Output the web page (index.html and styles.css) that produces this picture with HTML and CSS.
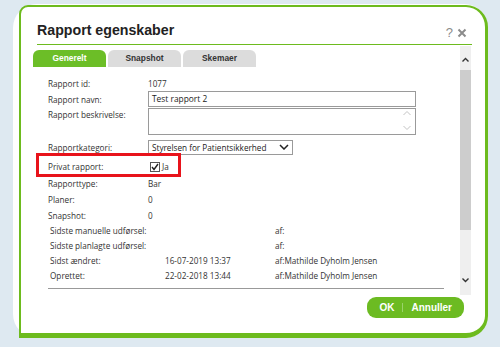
FILE: index.html
```html
<!DOCTYPE html>
<html lang="da">
  <head>
    <meta charset="UTF-8">
    <title>Rapport egenskaber</title>
    <link rel="stylesheet" href="styles.css">
  </head>
  <body>
    <div class="frame">
      <div class="dialog">
        <!-- Title -->
        <div class="header">
          <h1>Rapport egenskaber</h1>
          <div class="tools">
            <span class="help">?</span>
            <svg class="close" width="10" height="10" viewBox="0 0 10 10"><path d="M1.5 1.5L8.5 8.5M8.5 1.5L1.5 8.5" stroke="#8c8c8c" stroke-width="2"/></svg>
          </div>
        </div>

        <div class="main">
          <div class="pane">
            <!-- Tabs -->
            <div class="tabs">
              <div class="tab active">Generelt</div>
              <div class="tab">Snapshot</div>
              <div class="tab">Skemaer</div>
            </div>

            <div class="form">
              <div class="row"><span class="label">Rapport id:</span><span>1077</span></div>
              <div class="row"><span class="label">Rapport navn:</span><div class="input">Test rapport 2</div></div>
              <div class="row tall">
                <span class="label">Rapport beskrivelse:</span>
                <div class="input area">
                  <svg width="10" height="24" viewBox="0 0 10 24"><path d="M1.5 6L5 2.5L8.5 6M1.5 17L5 20.5L8.5 17" stroke="#c4c4c4" fill="none"/></svg>
                </div>
              </div>
              <div class="row">
                <span class="label">Rapportkategori:</span>
                <div class="select">Styrelsen for Patientsikkerhed
                  <svg width="10" height="6" viewBox="0 0 10 6"><path d="M1 1L5 5L9 1" stroke="#222" stroke-width="1.5" fill="none"/></svg>
                </div>
              </div>
              <div class="row marked">
                <span class="label">Privat rapport:</span>
                <span class="check"><span class="box"><svg width="8" height="8" viewBox="0 0 8 8"><path d="M1 4L3 6.5L7 1" stroke="#222" stroke-width="1.4" fill="none"/></svg></span>Ja</span>
                <span class="highlight"></span>
              </div>
              <div class="row"><span class="label">Rapporttype:</span><span>Bar</span></div>
              <div class="row"><span class="label">Planer:</span><span>0</span></div>
              <div class="row"><span class="label">Snapshot:</span><span>0</span></div>
            </div>

            <div class="history">
              <div class="hrow"><span class="hl">Sidste manuelle udførsel:</span><span class="hd"></span><span>af:</span></div>
              <div class="hrow"><span class="hl">Sidste planlagte udførsel:</span><span class="hd"></span><span>af:</span></div>
              <div class="hrow"><span class="hl">Sidst ændret:</span><span class="hd">16-07-2019 13:37</span><span>af:Mathilde Dyholm Jensen</span></div>
              <div class="hrow"><span class="hl">Oprettet:</span><span class="hd">22-02-2018 13:44</span><span>af:Mathilde Dyholm Jensen</span></div>
            </div>
            <div class="rule"></div>
          </div>

          <!-- Scrollbar -->
          <div class="scroll">
            <svg class="arrow" width="11" height="8" viewBox="0 0 11 8"><path d="M2.5 5.5L5.5 2.5L8.5 5.5" stroke="#333" stroke-width="1.4" fill="none"/></svg>
            <div class="thumb"></div>
            <svg class="arrow down" width="11" height="8" viewBox="0 0 11 8"><path d="M2.5 2.5L5.5 5.5L8.5 2.5" stroke="#333" stroke-width="1.4" fill="none"/></svg>
          </div>
        </div>

        <div class="footer">
          <div class="buttons">
            <span>OK</span>
            <span class="sep"></span>
            <span>Annuller</span>
          </div>
        </div>
      </div>
    </div>
  </body>
</html>
```

FILE: styles.css
```css
body {
  margin: 0;
  background-color: #dee9f1;
  font-family: 'Open Sans', sans-serif;
  color: #333;
}

.frame {
  margin: 4px 12px 0 13px;
  height: 334px;
  padding: 1px 0 0 6px;
  box-sizing: border-box;
  background-color: #fff;
  border-radius: 24px;
}

.dialog {
  height: 100%;
  box-sizing: border-box;
  background-color: #fff;
  border: solid #6dbb1e;
  border-width: 2px 3px 5px 2px;
  border-radius: 9px 22px 22px 0;
  display: flex;
  flex-direction: column;
}

.header {
  margin: 0 13px 0 16px;
  height: 37px;
  border-bottom: 1px solid #6dbb1e;
  display: flex;
  justify-content: space-between;
  align-items: flex-start;
}

h1 {
  margin: 15px 0 0 0;
  font-family: 'Liberation Sans', Arial, sans-serif;
  font-size: 14.2px;
  line-height: 16px;
  color: #222;
}

.tools {
  margin: 19px 5px 0 0;
  display: flex;
  align-items: center;
  gap: 4px;
}

.help {
  font-family: 'Liberation Sans', Arial, sans-serif;
  font-size: 13px;
  line-height: 14px;
  color: #8c8c8c;
}

.main {
  display: flex;
  margin: 1px 14px 0 12px;
  height: 249px;
}

.pane {
  flex: 1;
}

.tabs {
  display: flex;
  gap: 2px;
  margin-top: 4px;
}

.tab {
  width: 73px;
  height: 17px;
  line-height: 17px;
  text-align: center;
  background-color: #dcdcdc;
  border-radius: 6px 6px 0 0;
  font-family: 'Liberation Sans', Arial, sans-serif;
  font-weight: bold;
  font-size: 8.4px;
  color: #333;
}

.tab.active {
  background-color: #6cbe27;
  color: #fff;
}

.form {
  margin: 8px 0 0 15px;
  font-size: 8.2px;
}

.row {
  display: flex;
  align-items: center;
  height: 16px;
  position: relative;
}

.label {
  width: 100px;
  flex: none;
}

.row.tall {
  height: 29px;
  align-items: flex-start;
  margin: 1px 0 2px;
}

.row.tall .label {
  margin-top: 1px;
}

.input {
  width: 263px;
  height: 14px;
  line-height: 14px;
  border: 1px solid #9a9a9a;
  padding-left: 3px;
  font-size: 8.4px;
  color: #222;
  background: #fff;
}

.input.area {
  width: 260px;
  height: 25px;
  display: flex;
  justify-content: flex-end;
  padding-right: 3px;
}

.select {
  width: 137px;
  height: 13px;
  line-height: 13px;
  border: 1px solid #9a9a9a;
  padding: 0 3px;
  display: flex;
  justify-content: space-between;
  align-items: center;
  font-size: 8.2px;
  color: #222;
}

.row.marked {
  margin-top: 3px;
  height: 17px;
}

.check {
  display: flex;
  align-items: center;
  gap: 2px;
  margin-left: 2px;
}

.box {
  width: 8px;
  height: 8px;
  border: 1px solid #555;
  display: flex;
  align-items: center;
  justify-content: center;
}

.highlight {
  position: absolute;
  left: -12px;
  top: -5px;
  width: 139px;
  height: 18px;
  border: 3px solid #e8131b;
}

.history {
  margin: 0 0 0 17px;
  font-size: 8.2px;
}

.hrow {
  display: flex;
  align-items: center;
  height: 15px;
}

.hl {
  width: 115px;
}

.hd {
  width: 110px;
}

.rule {
  margin: 5px 16px 0 15px;
  border-top: 1px solid #999;
}

.scroll {
  width: 11px;
  background-color: #efefef;
  display: flex;
  flex-direction: column;
  align-items: center;
}

.arrow {
  margin-top: 10px;
}

.thumb {
  width: 11px;
  height: 160px;
  margin-top: 6px;
  background-color: #cdcdcd;
}

.arrow.down {
  margin-top: 46px;
}

.footer {
  display: flex;
  justify-content: flex-end;
  padding: 2px 21px 0 0;
}

.buttons {
  display: flex;
  align-items: center;
  height: 21px;
  padding: 0 12px;
  gap: 8px;
  background-color: #6cbb22;
  border-radius: 9px;
  font-family: 'Liberation Sans', Arial, sans-serif;
  font-weight: bold;
  font-size: 10px;
  color: #fff;
}

.sep {
  width: 1px;
  height: 9px;
  background-color: #9ad36a;
}
```
